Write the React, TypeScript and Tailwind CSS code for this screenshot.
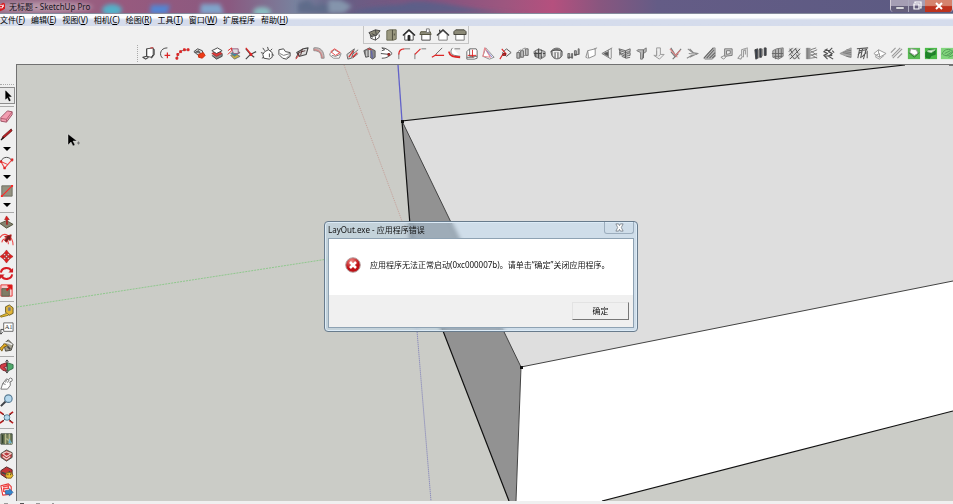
import type { ReactNode } from 'react';

const INK = '#454545';
const RED = '#dc2626';
const GRAY = '#8b8b8b';

function L({ d, s = INK, f = 'none', w = 1 }: { d: string; s?: string; f?: string; w?: number }) {
  return <path d={d} stroke={s} fill={f} strokeWidth={w} strokeLinejoin="round" />;
}

type Tool = { name: string; icon: ReactNode };

const menus = [
  ['文件', 'F'],
  ['编辑', 'E'],
  ['视图', 'V'],
  ['相机', 'C'],
  ['绘图', 'R'],
  ['工具', 'T'],
  ['窗口', 'W'],
  ['扩展程序', ''],
  ['帮助', 'H'],
];

const viewTools: Tool[] = [
  {
    name: '等轴',
    icon: <><L d="M4 8v4l5 2 4-3V8" f="#fff" /><L d="M2 6l7-3 5 1-4 5-5 1z" f="#8c8a78" /><L d="M5 7l4 2M9 3l1 6M3 9l3 2M9 10v4" /></>,
  },
  {
    name: '俯视图',
    icon: <><L d="M3 4l3-1h7v10l-3 1H3z" f="#9a987f" s="#6b6a55" /><L d="M9 3v11M11 7v2" s="#4b4a3c" /></>,
  },
  {
    name: '前视图',
    icon: <><L d="M4 8v6h9V8L8.500 4z" f="#fff" /><L d="M2 9l6.500-6L15 9" s="#222" w={1.3} /><L d="M7.500 14V9h2v5z" f="#222" s="#222" /></>,
  },
  {
    name: '右视图',
    icon: <><L d="M4 8h9v6H4z" f="#fff" /><L d="M3 5h10l1 3H2z" f="#8c8a78" s="#55543f" /><L d="M9 2h3v4H9z" f="#fff" s="#777" /></>,
  },
  {
    name: '后视图',
    icon: <><L d="M4 8v6h9V8L8.500 4z" f="#fff" s="#777" /><L d="M2 9l6.500-6L15 9M5 5V3" s="#333" w={1.3} /></>,
  },
  {
    name: '左视图',
    icon: <><L d="M4 8h9v6H4z" f="#fff" s="#777" /><L d="M4 3h9l2 2v3H2V5z" f="#8c8a78" s="#44433a" /></>,
  },
];

const extensionTools: Tool[] = [
  { name: '图纸', icon: <><L d="M6 3l7-1v7l-2 3-5-1z" f="#fff" /><L d="M6 3v8l-4 1 3 2 3-2M13 3l1 1v5l-3 4" w={1.2} /><L d="M10 2h3" s={RED} /></> },
  { name: '圆弧', icon: <><L d="M10 2C2 2 1 10 5 13" /><L d="M7 10h6M10 7v6" s={RED} w={1.3} /></> },
  { name: '折线', icon: <><L d="M2 13l1-4 4-4 6-1" s="#777" /><L d="M1 12h2v2H1zM2 8h2v2H2zM5 5h2v2H5zM9 3h2v2H9zM13 3h2v2h-2z" s={RED} f={RED} /></> },
  { name: '推面', icon: <><L d="M2 6l4-3 5 2 1 4-4 2z" f="#d8d8d8" /><L d="M3 7l4-2 2 3" f="#777" /><L d="M7 9l5-2 2 3-3 3-4-1z" f="#ef3b16" s="#c52e11" /></> },
  { name: '图层', icon: <><L d="M3 10l5 4 6-3V8" f="#888" /><L d="M3 8l5 3 6-3-5-3z" f="#e53b3b" s="#a33" /><L d="M3 5l5 3 6-3-5-3z" f="#fff" /></> },
  { name: '彩色图层', icon: <><L d="M5 10l4 4 6-3-4-2z" f="#c4b23f" s="#777" /><L d="M5 8l4 3 6-4-4-2z" f="#3a8fa4" s="#777" /><L d="M6 3h7v5H8z" f="#d9d9df" s="#9b6080" /><L d="M2 5l4-3v3l-4 4" s={RED} /></> },
  { name: '交叉', icon: <><L d="M3 3l5 6 4 3M14 6L8 9l-5 5" w={1.2} /><L d="M3 2l5 6" s={RED} w={1.3} /><L d="M7.500 8h2v2h-2z" f={RED} s={RED} /></> },
  { name: '圆角盒', icon: <><L d="M5 6l4-2 4 3v5l-3 2-6-1-1-4z" f="#fff" /><L d="M3 2l2 3M1 7l3 1M8 1l1 3M13 3l-2 2M15 10l-2-1M10 8v4M2 13l2-1" /></> },
  { name: '柔化', icon: <><L d="M2 4l5-1 2 3 5 1v4l-4 3-4-1-4-4z" f="#fff" /><L d="M3 8l4 2 7-2M10 13l3-3" s="#777" /></> },
  { name: '加厚', icon: <><L d="M3 7l7-4 5-1-2 7-7 2z" f="#ddd" w={1.2} /><L d="M2 13l3-6 7-2M9 3l-2 7M5 7v4" s="#533" /><L d="M2 14l3-4" s={RED} /></> },
  { name: '弯管', icon: <><L d="M3 2c7-1 11 3 11 11h-3C11 7 8 5 3 5z" f="#c7b5b5" s={GRAY} /><L d="M3 4c6 0 8 3 9 9" s="#d77777" /></> },
  { name: '倒角盒', icon: <><L d="M2 8l5-4 7 4-2 5H6l-4-3z" f="#fff" s={GRAY} /><L d="M3 6l4-3 6 4-5 3z" s="#e44" /><L d="M4 10l4 1 5-2" s="#777" /></> },
  { name: '切割', icon: <><L d="M2 9l8-6-3 10-4 1zM8 9l6-5M8 13l6-5" f="#d5d5d5" s="#666" /><L d="M4 12L9 5M8 12l5-5" s={RED} w={1.2} /></> },
  { name: '圆柱', icon: <><L d="M2 5l6-3 6 3v7l-3 2-3-3-4 1z" f="#888" s="#555" /><L d="M5 5v6M8 4v8" s="#ddd" /><L d="M10 5l1 8" s="#6366a8" w={1.5} /><L d="M6 3l4 1" s={RED} /></> },
  { name: '圆锥', icon: <><L d="M3 2c5 0 8 3 11 6-4 4-7 5-11 5M2 8l9 1M3 2l3 2-3 1" f="#fff" /><L d="M9.500 8h2v2h-2z" f={RED} s="#812323" /></> },
  { name: '圆角', icon: <><L d="M3 14V8" s="#777" /><L d="M3 9c0-4 2-6 6-6" s={RED} w={1.3} /><L d="M9 3h6" s="#777" /></> },
  { name: '倒角', icon: <><L d="M2 14V8M9 3h5" s="#777" /><L d="M2 9l6-6" s={RED} w={1.2} /></> },
  { name: '延伸', icon: <><L d="M13 2L6 9" s="#666" /><L d="M2 12l5-3M6 10h9" s={RED} w={1.3} /></> },
  { name: '曲面', icon: <><L d="M6 2C3 5 4 9 8 10l6 1M8 3h6" f="#fff" s="#777" /><L d="M2 6c1 5 5 6 12 6" s={RED} w={2} /></> },
  { name: '线框', icon: <><L d="M3 6l3-3h7l1 2v8l-3 1H3z" f="#fff" s="#666" /><L d="M6 3v8h8M3 12h8" s="#666" /><L d="M4 10h9M9 4v8" s={RED} /></> },
  { name: '棱锥', icon: <><L d="M5 2l9 10-5 2-7-3z" f="#fff" s={GRAY} /><L d="M4 2l6 10-8-1z" s="#e88a91" w={1.2} /><L d="M6 5l6 7" s="#7779c8" /></> },
  { name: '钻孔', icon: <><L d="M5 7l4-4 5 4-5 4z" f="#eee" s="#555" /><L d="M2 14l3-5M4 3l5 6" s={RED} w={1.2} /><L d="M5 8h3v2H5z" f={RED} s="#7f1d1d" /></> },
  { name: '台阶', icon: <><L d="M2 7h3v6H2zM6 5h3v7H6zM11 3h3v7h-3z" f="#bbb" s="#666" /><L d="M3 6l3-2M7 4l4-2M5 13l2-2M9 11l3-2" s={GRAY} /></> },
  { name: '方块组', icon: <><L d="M2 6l5-3 7 3v5l-5 3-6-3z" f="#aaa" s="#777" /><L d="M4 5v7M7 3v10M10 4v9M2 8h12" s="#444" /><L d="M4 6h2M11 7v4M8 6h2" s="#eee" /></> },
  { name: '穹顶', icon: <><L d="M2 6c3-5 10-5 12 0v4c-2 5-9 5-11 0z" f="#999" s="#666" /><L d="M4 6h9M5 6v5M8 7v6M11 6v6" s="#fff" /><L d="M2 6c5-3 8-2 12 0" /></> },
  { name: '百叶', icon: <><L d="M2 8h2v5H2zM6 8h1v5H6zM9 5h2v5H9zM13 3h1v6h-1z" f="#aaa" s="#666" /><L d="M2 12h4M9 9h4" s="#555" /></> },
  { name: '薄板', icon: <><L d="M5 5l8-2v7l-7 3z" f="#fff" s={GRAY} /><L d="M5 5l-2 7 2 1M12 3l3-1" s={GRAY} /></> },
  { name: '左翻', icon: <><L d="M13 2L2 8l10 6" s="#777" /><L d="M4 8l5-2v5z" f="#555" s="#666" /><L d="M12 3v10M9 4v8" s={GRAY} /></> },
  { name: '叠片', icon: <><L d="M2 3l7 2 5-2v3L9 7 3 5zM3 7l6 2 5-2v3l-5 1-5-2zM5 11l5 2 4-1" f="#ccc" s="#666" /><L d="M3 4v6M9 5v8" s="#555" /></> },
  { name: '立柱', icon: <><L d="M4 4h6l3-2v4l-3 2-1 6H7V7L3 5z" f="#bbb" s="#777" /><L d="M10 4v9" s="#555" /></> },
  { name: '下落', icon: <><L d="M6 2h4v7h4l-5 5-6-4h3z" f="#eee" s="#999" /><L d="M6 5v6M10 9l-2 2" s="#999" /></> },
  { name: '修剪', icon: <><L d="M3 2l5 8 6-7M5 14l6-6M3 6l5 6" s="#777" w={1.2} /><L d="M2 3l8 9M8 10l5-5" s="#e08080" w={1.2} /></> },
  { name: '连接', icon: <><L d="M3 3l5 4 6 1-7 2-5 3M5 3l4 4M4 8l9 1M5 12l6-3" s={GRAY} w={1.1} /></> },
  { name: '斜纹', icon: <><L d="M2 13L12 2h2v9l-3 3H3z" f="#bbb" s="#999" /><L d="M2 13L12 2M5 13l8-9M8 13l6-6M11 13l3-3" s="#666" w={1.1} /></> },
  { name: '框架', icon: <><L d="M6 3h8v7l-8 1zM8 5v4l4-1V5z" f="#ccc" s="#777" /><L d="M6 10l-4 2 3 2 3-3" s={GRAY} /></> },
  { name: '门框', icon: <><L d="M6 11V4l6-2v10M8 12V5l2-1v5M5 9l-3 4 3 1 2-3" s="#999" w={1.1} /></> },
  { name: '面板', icon: <><L d="M2 4l3-1v10l-2 1zM7 3h2v9H7zM12 2h2v8h-2z" f="#39404c" s="#444" /><L d="M6 4v9M10 3v8" s="#999" w={1.5} /></> },
  { name: '栅格', icon: <><L d="M3 5l4-2 7-1v9l-5 3-6-2z" f="#bbb" s="#777" /><L d="M6 4v10M9 3v10M12 3v9M2 8h12M4 11h9" s="#666" /></> },
  { name: '编织', icon: <><path d="M2 2h12v12H2z" fill="#ddd" /><L d="M2 6l4-4M2 10l8-8M3 14L14 3M8 14l6-6M3 3l3 5M9 3l3 5M4 9l4 5M10 9l3 5" s="#505050" /></> },
  { name: '木纹', icon: <><path d="M2 2h5v12H2z" fill="#999" /><L d="M7 4l6-2M7 7l7-3M7 5l7 5M7 10l7-2M7 9l7 4M7 13l7-1M4 2v12" s="#777" /></> },
  { name: '鱼鳞', icon: <><L d="M7 3L3 6l4 2-4 2 4 4M12 2L8 6l4 2-4 3 5 3M4 4l6 1M4 11l8-1M12 5l2 2" s="#505050" w={1.2} /></> },
  { name: '坡面', icon: <><L d="M2 8l12-6v10L9 11z" f="#aaa" s="#999" /><L d="M5 7l9 2M7 6l7 1M9 11l5 1M9 4l5 1" s="#777" /></> },
  { name: '龙骨', icon: <><L d="M2 3l12-1M4 5l9-1M5 3L3 13M8 3L6 13M12 3l-3 11M13 5v8M3 9l4-3M7 12l5-5" s="#555" w={1.1} /></> },
  { name: '屋顶', icon: <><L d="M2 8l5-4 8 4-7 4z" f="#fff" s="#999" /><L d="M7 4v4M8 12V8l-4 2v2l4 2 5-4" s="#999" /></> },
  { name: '斜线', icon: <><L d="M2 7l5-5M3 11l9-9M4 13L14 3M9 13l5-5" s="#999" w={1.2} /></> },
  { name: '地形', icon: <><path d="M2 2h13v12H2z" fill="#5abb55" /><L d="M5 3l6 1 2 4-4 2-5-3z" f="#fff" s="#999" /><L d="M3 7l6 5 5-5" s="#277b29" /></> },
  { name: '山体', icon: <><path d="M2 2h13v12H2z" fill="#4aba48" /><L d="M3 7l3-3h7v5l-4 1-2 3-4-1z" f="#1f8529" s="#1c7629" /><L d="M5 5l8-1-4 3-4-1z" f="#dff5dc" s="#aad0a8" /></> },
  { name: '草地', icon: <><path d="M1 2h15v12H1z" fill="#82d67d" /><L d="M2 9c2-6 8-7 12-3-3 4-6 6-11 3M5 8l6-3M7 10l6-4M9 12l5-2" s="#529a58" /></> },
];

const select: Tool[] = [
  { name: '选择', icon: <L d="M6 3v9l2-2 2 4 1-1-2-4h3z" f="#000" s="#000" w={0.5} /> },
];

const eraser: Tool[] = [
  { name: '擦除', icon: <><L d="M2 9l7-7 5 1v3l-6 8-6-1z" f="#f29db0" s="#9b5364" /><L d="M2 10l6 1 6-8M8 11v3" s="#b35c70" /></> },
];

const drawTools: Tool[] = [
  { name: '直线', icon: <><L d="M3 13l1-3 9-8 1 2-9 8z" f="#bc1b20" s="#5b1717" w={0.8} /><L d="M2 14l3-3" s="#111" w={1.2} /></> },
  { name: '圆弧工具', icon: <><L d="M2 7C4 1 12 1 14 7" /><L d="M2 7l4 7 8-9M2 7l7 3" s="#ef4444" w={1.1} /><L d="M1 6h2v2H1zM13 4h2v2h-2zM5 13h2v2H5z" f={RED} s={RED} w={0.5} /></> },
  { name: '矩形', icon: <><L d="M3 3h11v11H3z" f="#949280" s="#6f6e62" /><L d="M3 14L14 3" s="#ff2929" w={1.2} /><path d="M2 13h2v2H2zM13 2h2v2h-2z" fill="#f22" /></> },
];

const editTools: Tool[] = [
  { name: '推/拉', icon: <><L d="M1 9l7-3 7 4-7 4z" f="#858371" s="#53533e" /><L d="M8 10V5H6l2-4 3 4H9v5z" f="#e21a1a" s="#991b1b" w={0.6} /></> },
  { name: '偏移', icon: <><L d="M1 6C5-1 15 4 15 14M3 11c1-5 7-5 7 2" s="#ef4444" w={1.1} /><L d="M6 9l2-3-2-1 7-2-1 6-2-1-2 3z" f="#6a2020" s="#b91c1c" /></> },
  { name: '移动', icon: <path d="M8 1l3 4H9v2H7V5H5zM8 15l3-4H9V9H7v2H5zM1 8l4-3v2h2v2H5v2zM15 8l-4-3v2H9v2h2v2z" fill="#e02020" stroke="#961818" strokeWidth=".5" /> },
  { name: '旋转', icon: <><L d="M2 7c1-6 9-6 11-2M14 9c-1 6-9 6-11 2" s="#d71e25" w={2.2} /><path d="M15 2v5h-5zM1 14V9h5z" fill="#cf1d24" /></> },
  { name: '缩放', icon: <><L d="M2 2h12v12H2z" f="#f7cccc" s="#e43838" /><L d="M3 6h8v8H3z" f="#807d66" s="#656250" /><L d="M8 8l5-5M9 3h4v4" s="#db1919" w={2} /></> },
];

const measureTools: Tool[] = [
  { name: '卷尺', icon: <><L d="M7 3l4-2 4 3v6l-4 2-4-3z" f="#e2b537" s="#6a5b29" /><L d="M10 4h2v3h-2z" f="#777" s="#888" /><L d="M8 10l-7 3 1 1 8-2" f="#efc226" s="#8c7323" /></> },
  { name: '文字', icon: <><L d="M5 2h10v9H5z" f="#fff" s="#666" /><text x="6" y="9" className="fill-[#333] font-['Liberation_Serif',serif] text-[7px]">A1</text><L d="M5 9H2v5M0 12l2 2 2-2" /></> },
  { name: '颜料桶', icon: <><L d="M5 6l5-4 5 5-2 6-6 1z" f="#a4a091" s="#494740" /><L d="M5 6c2-3 7 0 9 1" s="#eee" w={1.5} /><L d="M6 6L1 11l2 3 2-4 4-2z" f="#e6ad20" s="#7b5e18" /><L d="M9 9l3 3" w={1.8} /></> },
];

const cameraTools: Tool[] = [
  { name: '环绕观察', icon: <><L d="M9 4l6 2v4l-6 3z" f="#4fa96b" s="#386f4a" /><L d="M8 4L2 6l-1 3 3 3 4 1-1-3-2-1 3-1z" f="#d23c46" s="#7f242b" /><L d="M8.500 1v14M7 3l1.500-2L10 3M7 13l1.500 2 1.500-2" /></> },
  { name: '平移', icon: <L d="M2 14l2-6 4-5 2 1 2-2 2 1v2l-2 2v3l-3 4zM4 8l3 1M8 4l-1 3M11 4L9 7M13 5l-2 2" f="#fff" s="#555" w={0.8} /> },
  { name: '视图缩放', icon: <><L d="M7 9l-5 5" s="#404248" w={2.1} /><circle cx="10" cy="6" r="4" fill="#b6d8ed" stroke="#587b94" strokeWidth="1.2" /></> },
  { name: '缩放范围', icon: <><L d="M1 2l4 3M15 2l-4 3M1 14l4-3M15 14l-4-3" s="#b91c1c" w={1.8} /><L d="M4 4l3 3M4 12l3-3M13 4l-3 3M13 12l-3-3" s="#333" /><circle cx="8.500" cy="8" r="3" fill="#b3d8ed" stroke="#59829a" /></> },
];

const warehouseTools: Tool[] = [
  { name: '添加位置', icon: <><L d="M2 3h12v11H2z" f="#717d58" s="#3d493f" /><L d="M7 3v11M11 3v11M8 8l6 6" s="#b7b98d" w={1.4} /><L d="M4 4v9" s="#29382c" w={1.3} /><path d="M11 8l3 5h-4z" fill="#6eb0c8" /></> },
  { name: '3D 模型库', icon: <><L d="M2 6l6-4 6 3v5l-6 4-6-4z" f="#b93b3f" s="#4c5c50" /><L d="M4 6l4-2 5 2-5 3zM4 9l4 3 4-3" s="#f0d9d2" w={1.2} /></> },
  { name: '扩展程序库', icon: <><L d="M2 6l6-4 6 3v5l-6 4-6-4z" f="#c33537" s="#4b2825" /><L d="M3 8l5 2 4-3" w={2} /><L d="M8 8h5l2 3-2 3H9l-2-2z" f="#edc030" s="#836422" /><path d="M9 9h1v2H9zM12 9h1v2h-1z" fill="#433" /></> },
  { name: '发送到 LayOut', icon: <><L d="M2 4l8-2 3 3v8l-9 1z" f="#fff" s="#e63535" w={1.2} /><L d="M4 5l6-1v3H5v3l3 1" s="#f04a4a" w={1.6} /><path d="M7 9h4V7l4 4-4 4v-2H7z" fill="#3486cd" stroke="#285c92" strokeWidth=".7" /></> },
];

function ToolButton({ tool, side = false, pressed = false }: { tool: Tool; side?: boolean; pressed?: boolean }) {
  return (
    <button
      aria-label={tool.name}
      aria-pressed={pressed || undefined}
      className={`flex h-[17px] shrink-0 items-center justify-center ${side ? 'w-[13px]' : 'w-[17px]'} ${
        pressed ? 'w-[15px] border border-l-0 border-[#8e8e8e] bg-[#e9e9e9]' : ''
      }`}
    >
      <svg viewBox="0 0 16 16" className="h-[15px] w-[15px] shrink-0">{tool.icon}</svg>
    </button>
  );
}

function Separator() {
  return (
    <div className="flex h-1 w-[14px] shrink-0 items-center">
      <div className="h-px w-full bg-[#aaa]" />
    </div>
  );
}

function TitleBar() {
  return (
    <header className="relative flex h-[13px] overflow-hidden bg-[#5f5d85]">
      <svg viewBox="0 0 953 13" preserveAspectRatio="none" className="absolute h-full w-full">
        <defs>
          <linearGradient id="wallpaper">
            <stop offset="0" stopColor="#98708a" />
            <stop offset=".12" stopColor="#985a7e" />
            <stop offset=".24" stopColor="#8a5980" />
            <stop offset=".31" stopColor="#78829e" />
            <stop offset=".36" stopColor="#675e85" />
            <stop offset=".45" stopColor="#80547f" />
            <stop offset=".53" stopColor="#9d567f" />
            <stop offset=".58" stopColor="#b5507e" />
            <stop offset=".63" stopColor="#88567f" />
            <stop offset=".69" stopColor="#645c86" />
            <stop offset="1" stopColor="#5b5a82" />
          </linearGradient>
          <filter id="soft" x="-50%" y="-50%" width="200%" height="200%">
            <feGaussianBlur stdDeviation="2" />
          </filter>
        </defs>
        <path d="M0 0h953v13H0z" fill="url(#wallpaper)" />
        <g filter="url(#soft)">
          <ellipse cx="45" cy="7" rx="48" ry="5" fill="#c9b2be" opacity=".6" />
          <ellipse cx="112" cy="10" rx="10" ry="6" fill="#55b0c8" />
          <path d="M151 5h19l-3 9h-17z" fill="#5285d3" />
          <path d="M201 4h19l4 10h-24z" fill="#80a4cb" />
          <ellipse cx="262" cy="12" rx="9" ry="5" fill="#8abcc0" />
          <path d="M298 3l10-3 7 6 8-3 16 10h-41z" fill="#5f6c8a" />
          <path d="M328 0h13l11 6-8 7h-15z" fill="#8494ac" />
          <path d="M350 13c30-10 48-6 60-11 35-3 70 13 120 11z" fill="#50638b" opacity=".7" />
        </g>
      </svg>
      <div className="relative flex flex-1 items-center gap-1 text-[8px] leading-none text-[#17141b]">
        <svg viewBox="0 0 6 10" className="h-[10px] w-[5px]">
          <path d="M0 2l4-2 2 1v6L3 9 0 10z" fill="#d71920" />
          <path d="M0 3h3v3H0M4 2v3" fill="none" stroke="#fff" />
        </svg>
        <h1>无标题 - SketchUp Pro</h1>
      </div>
      <div className="relative flex h-[12px] overflow-hidden rounded-b-sm border-x border-[#d3ccd7] text-white">
        <button aria-label="最小化" className="flex w-[18px] items-center justify-center border-r border-[#aaa8bc] bg-linear-to-b from-[#a59eb4] from-50% to-[#655f7c] to-50%">
          <svg viewBox="0 0 10 10" className="h-[10px] w-[10px]"><path d="M1 6h8v2H1z" fill="#fff" stroke="#5b5b69" strokeWidth=".5" /></svg>
        </button>
        <button aria-label="还原" className="flex w-[16px] items-center justify-center bg-linear-to-b from-[#a59eb4] from-50% to-[#655f7c] to-50%">
          <svg viewBox="0 0 10 10" className="h-[10px] w-[10px]"><path d="M3 2V1h6v6H8M2 3h5v5H2z" fill="none" stroke="#fff" strokeWidth="1.2" /></svg>
        </button>
        <button aria-label="关闭" className="flex w-[27px] items-center justify-center bg-linear-to-b from-[#d5836d] from-45% to-[#bd321d] to-55%">
          <svg viewBox="0 0 10 10" className="h-[10px] w-[10px]"><path d="M2 2l6 6M8 2L2 8" stroke="#fff" strokeWidth="2" /></svg>
        </button>
      </div>
    </header>
  );
}

function Scene() {
  return (
    <svg viewBox="17 65 936 436" preserveAspectRatio="xMinYMin slice" className="absolute inset-0 h-full w-full">
      <path d="M17 65h936v436H17z" fill="#cbccc7" />
      {/* Axes */}
      <path d="M344 65l68 183" stroke="#c5a099" strokeDasharray="1 1" />
      <path d="M17 307l395-61" stroke="#8fc88d" strokeDasharray="2 1" />
      <path d="M398 65l4 56" stroke="#6262c9" strokeWidth="1.3" />
      <path d="M412 270l19 231" stroke="#7777b8" strokeDasharray="1 1" />
      {/* Box */}
      <path d="M402 121L905 65h48v216L521 367z" fill="#dedede" />
      <path d="M402 121l10 130 97 250h7l5-134z" fill="#929292" />
      <path d="M521 367l432-86v130L602 501h-86z" fill="#fff" />
      <path d="M521 367l432-86M402 121l119 246-5 134" fill="none" stroke="#444" />
      <path d="M905 65l-503 56 10 130 97 250M602 501l351-90M949 65h4" fill="none" stroke="#111" strokeWidth="1.2" />
      <path d="M401 120h3v3h-3zM520 366h3v3h-3z" fill="#111" />
      {/* Cursor */}
      <path d="M68 134v11l3-3 2 4 2-1-2-4h4z" fill="#000" stroke="#eee" strokeWidth=".4" />
      <path d="M77 143h3M78.500 141.500v3" stroke="#777" />
    </svg>
  );
}

function ErrorDialog() {
  return (
    <div
      role="dialog"
      aria-labelledby="dialog-title"
      className="absolute top-[156px] left-[307px] flex w-[314px] flex-col rounded-[4px] border border-[#687b8c] bg-[#b4dcff]/35 px-[3px] pb-[3px] text-[8px] text-[#111] shadow-[inset_0_0_0_1px_#dcebf7] backdrop-blur-[2px]"
    >
      <div className="flex h-4 items-start justify-between">
        <h2 id="dialog-title" className="leading-4">LayOut.exe - 应用程序错误</h2>
        <button aria-label="关闭对话框" className="flex h-[12px] w-[30px] items-center justify-center rounded-b-[3px] border border-t-0 border-[#9cadbd]">
          <svg viewBox="0 0 10 10" className="h-[9px] w-[9px]">
            <path d="M1 1h3l1 2 1-2h3L7 5l2 4H6L5 7 4 9H1l2-4z" fill="#fff" stroke="#68717a" strokeWidth=".8" />
          </svg>
        </button>
      </div>
      <div className="border border-[#8ea2b3]">
        <div className="flex h-[56px] items-center gap-[9px] bg-white px-4 pb-1">
          <svg viewBox="0 0 16 16" className="h-4 w-4 shrink-0">
            <defs>
              <radialGradient id="error" cx=".4" cy=".25">
                <stop offset="0" stopColor="#ef8d87" />
                <stop offset="1" stopColor="#be1015" />
              </radialGradient>
            </defs>
            <circle cx="8" cy="8" r="7.300" fill="url(#error)" stroke="#b4a4a4" />
            <path d="M5 5l6 6M11 5l-6 6" stroke="#fff" strokeWidth="2.500" />
          </svg>
          <p className="whitespace-nowrap">应用程序无法正常启动(0xc000007b)。请单击“确定”关闭应用程序。</p>
        </div>
        <div className="flex h-[32px] items-center justify-end bg-[#f0f0f0] pr-1">
          <button className="h-[18px] w-[57px] border border-t-[#e3e3e3] border-r-[#777] border-b-[#777] border-l-[#e3e3e3] bg-[#f0f0f0]">确定</button>
        </div>
      </div>
    </div>
  );
}

export default function App() {
  return (
    <div className="flex min-h-screen flex-col overflow-hidden bg-[#f0f0f0] font-['Noto_Sans','Noto_Sans_CJK_SC',sans-serif] text-black">
      <TitleBar />
      <nav className="flex h-[13px] items-center gap-1.5 border-t border-[#858b9c] bg-linear-to-b from-[#fbfcfe] from-30% to-[#d5dcec] to-50% text-[8px] leading-none">
        {menus.map(([label, key]) => (
          <button key={label} className="whitespace-nowrap">
            {label}
            {key && <>(<u>{key}</u>)</>}
          </button>
        ))}
      </nav>

      {/* Toolbars */}
      <div className="flex h-[19px] items-start pl-[363px]">
        <div className="flex h-[18px] border-r border-b border-l border-[#c4c4c4] pl-0.5">
          {viewTools.map((tool) => <ToolButton key={tool.name} tool={tool} />)}
        </div>
      </div>
      <div className="flex h-[19px] items-start overflow-hidden pl-[137px]">
        <div className="flex border-l border-dotted border-[#aaa] pl-[2px]">
          {extensionTools.map((tool) => <ToolButton key={tool.name} tool={tool} />)}
        </div>
      </div>

      <div className="flex flex-1">
        <aside className="flex w-[16px] shrink-0 flex-col items-start overflow-hidden pt-[20px]">
          <div className="mb-0.5 w-[14px] border-t border-dotted border-[#aaa]" />
          {select.map((tool) => <ToolButton key={tool.name} tool={tool} side pressed />)}
          <Separator />
          <div className="h-[18px]">
            {eraser.map((tool) => <ToolButton key={tool.name} tool={tool} side />)}
          </div>
          {drawTools.map((tool) => (
            <div key={tool.name} className="flex h-7 w-[13px] shrink-0 flex-col items-center">
              <ToolButton tool={tool} side />
              <button aria-label={`${tool.name}选项`} className="flex h-[11px] items-center">
                <svg viewBox="0 0 8 4" className="h-[4px] w-[8px]"><path d="M0 0h8L4 4z" /></svg>
              </button>
            </div>
          ))}
          {[editTools, measureTools, cameraTools, warehouseTools].map((group, i) => (
            <div key={i}>
              <Separator />
              {group.map((tool) => <ToolButton key={tool.name} tool={tool} side />)}
            </div>
          ))}
        </aside>
        <main className="relative min-w-0 flex-1 overflow-hidden border-t border-l border-[#717171]">
          <Scene />
          <ErrorDialog />
        </main>
      </div>
      <footer className="flex h-[3px] items-end gap-3 pl-1">
        <div className="h-px w-1 bg-[#999]" />
        <div className="h-px w-1 bg-[#555]" />
        <div className="h-px w-1 bg-[#999]" />
        <div className="h-px w-0.5 bg-[#999]" />
      </footer>
    </div>
  );
}
